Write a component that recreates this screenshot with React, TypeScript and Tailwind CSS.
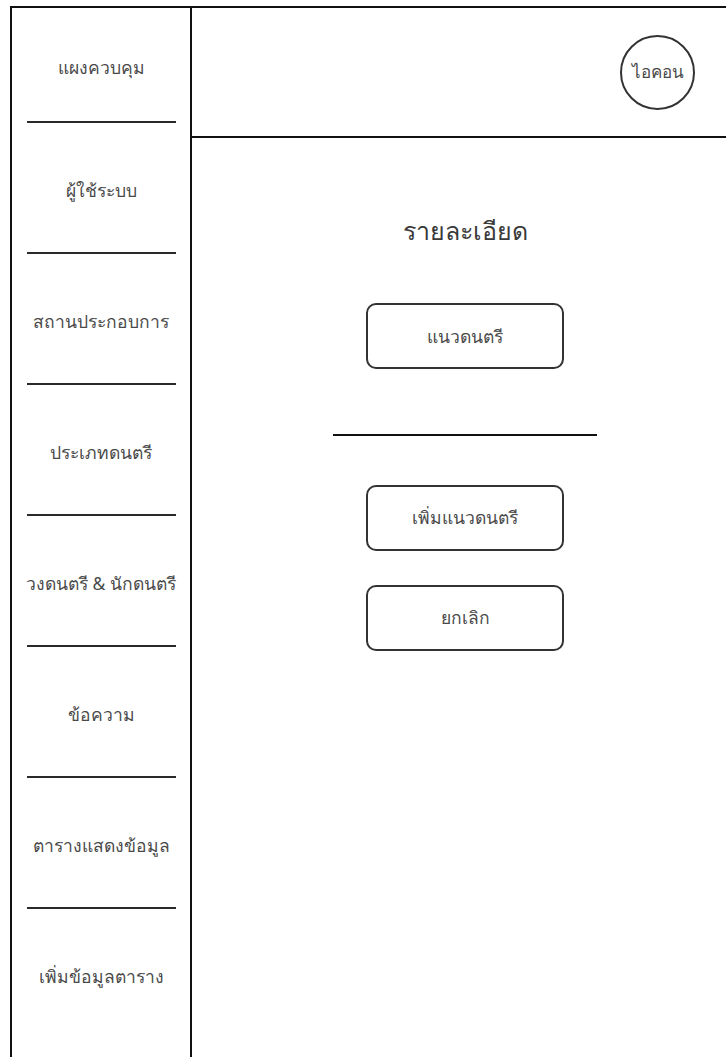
import React from 'react';

const menuItems = [
  'แผงควบคุม',
  'ผู้ใช้ระบบ',
  'สถานประกอบการ',
  'ประเภทดนตรี',
  'วงดนตรี & นักดนตรี',
  'ข้อความ',
  'ตารางแสดงข้อมูล',
  'เพิ่มข้อมูลตาราง',
];

const Sidebar: React.FC = () => (
  <nav className="flex w-[182px] shrink-0 flex-col border-x-2 border-t-2 border-[#111] pt-[49px]">
    {menuItems.map((label, i) => (
      <div key={label}>
        <div className="h-5 whitespace-nowrap text-center text-[17.5px] leading-5 text-[#4a4a4a]">{label}</div>
        {i < menuItems.length - 1 && (
          <div
            className={
              i === 0
                ? 'mx-auto mt-[44px] mb-[57px] h-[2px] w-[149px] bg-[#2a2a2a]'
                : 'mx-auto mt-[52px] mb-[57px] h-[2px] w-[149px] bg-[#2a2a2a]'
            }
          />
        )}
      </div>
    ))}
  </nav>
);

const OutlineButton: React.FC<{ label: string }> = ({ label }) => (
  <button className="flex h-[66px] w-[198px] items-center justify-center rounded-[10px] border-2 border-[#333] bg-white text-[17.5px] text-[#4a4a4a]">
    {label}
  </button>
);

export default function App() {
  return (
    <div
      className="flex h-[1057px] w-[726px] overflow-hidden bg-white pt-[6px] pl-[10px]"
      style={{ fontFamily: '"Noto Sans", "Liberation Sans", sans-serif' }}
    >
      <Sidebar />
      <main className="flex min-w-0 flex-1 flex-col border-t-2 border-[#111]">
        <header className="flex h-[130px] items-center justify-end border-b-2 border-[#111] pr-[31px]">
          <div className="flex h-[75px] w-[75px] items-center justify-center rounded-full border-2 border-[#333] text-[17px] text-[#4a4a4a]">
            ไอคอน
          </div>
        </header>
        <section className="flex flex-col items-center pt-[78px] pl-[12px]">
          <h1 className="text-[25px] leading-7 text-[#3a3a3a]">รายละเอียด</h1>
          <div className="mt-[59px]">
            <OutlineButton label="แนวดนตรี" />
          </div>
          <div className="mt-[65px] h-[1.5px] w-[264px] bg-[#111]" />
          <div className="mt-[49px] flex flex-col gap-[34px]">
            <OutlineButton label="เพิ่มแนวดนตรี" />
            <OutlineButton label="ยกเลิก" />
          </div>
        </section>
      </main>
    </div>
  );
}
